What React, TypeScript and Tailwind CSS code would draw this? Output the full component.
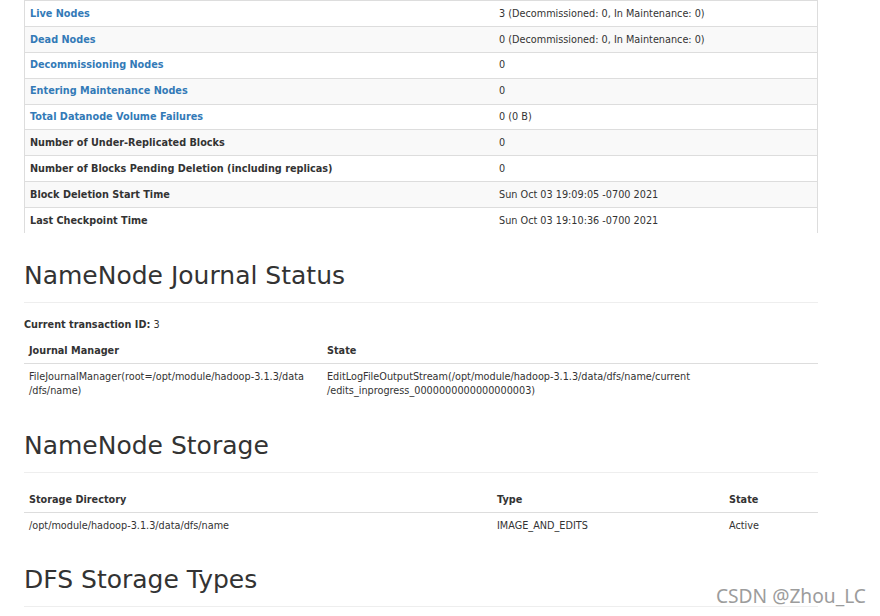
import React from 'react';

const overview = [
  { label: 'Live Nodes', value: '3 (Decommissioned: 0, In Maintenance: 0)', link: true },
  { label: 'Dead Nodes', value: '0 (Decommissioned: 0, In Maintenance: 0)', link: true },
  { label: 'Decommissioning Nodes', value: '0', link: true },
  { label: 'Entering Maintenance Nodes', value: '0', link: true },
  { label: 'Total Datanode Volume Failures', value: '0 (0 B)', link: true },
  { label: 'Number of Under-Replicated Blocks', value: '0' },
  { label: 'Number of Blocks Pending Deletion (including replicas)', value: '0' },
  { label: 'Block Deletion Start Time', value: 'Sun Oct 03 19:09:05 -0700 2021' },
  { label: 'Last Checkpoint Time', value: 'Sun Oct 03 19:10:36 -0700 2021' },
];

const PageHeader = ({ title, className = 'mt-[30px]' }: { title: string; className?: string }) => (
  <div className={`${className} pb-[13px] border-b border-[#eeeeee]`}>
    <h2 className="text-[25px] leading-[27px] font-normal text-[#333333]">{title}</h2>
  </div>
);

const App = () => {
  return (
    <div
      className="relative w-[880px] h-[616px] overflow-hidden bg-white text-[#333333]"
      style={{ fontFamily: '"DejaVu Sans", Verdana, sans-serif' }}
    >
      <div className="ml-[24px] w-[794px]">
        {/* Summary table */}
        <div className="border-x border-[#dddddd]">
          {overview.map((row, i) => (
            <div
              key={row.label}
              className={`flex items-center h-[25.9px] pt-px border-t border-[#dddddd] text-[9.7px] ${
                i % 2 === 1 ? 'bg-[#f9f9f9]' : 'bg-white'
              }`}
            >
              <div className="w-[469px] pl-[5px] font-bold">
                {row.link ? <a className="text-[#337ab7]">{row.label}</a> : row.label}
              </div>
              <div className="flex-1 pl-[5px]">{row.value}</div>
            </div>
          ))}
        </div>

        {/* Journal status */}
        <div className="-mt-px">
          <PageHeader title="NameNode Journal Status" />
        </div>
        <p className="mt-[15px] text-[9.7px] leading-[14px]">
          <span className="font-bold">Current transaction ID:</span> 3
        </p>
        <div className="mt-[6px] text-[9.7px] leading-[14px]">
          <div className="flex h-[26px] items-center border-b border-[#dddddd] font-bold">
            <div className="w-[298px] pl-[5px]">Journal Manager</div>
            <div className="flex-1 pl-[5px]">State</div>
          </div>
          <div className="flex pt-[6px] pb-[4px]">
            <div className="w-[298px] pl-[5px]">
              FileJournalManager(root=/opt/module/hadoop-3.1.3/data
              <br />
              /dfs/name)
            </div>
            <div className="flex-1 pl-[5px]">
              EditLogFileOutputStream(/opt/module/hadoop-3.1.3/data/dfs/name/current
              <br />
              /edits_inprogress_0000000000000000003)
            </div>
          </div>
        </div>

        {/* Storage */}
        <PageHeader title="NameNode Storage" />
        <div className="mt-[14px] text-[9.7px] leading-[14px]">
          <div className="flex h-[26px] items-center border-b border-[#dddddd] font-bold">
            <div className="w-[468px] pl-[5px]">Storage Directory</div>
            <div className="w-[232px] pl-[5px]">Type</div>
            <div className="flex-1 pl-[5px]">State</div>
          </div>
          <div className="flex h-[26px] items-center">
            <div className="w-[468px] pl-[5px]">/opt/module/hadoop-3.1.3/data/dfs/name</div>
            <div className="w-[232px] pl-[5px]">IMAGE_AND_EDITS</div>
            <div className="flex-1 pl-[5px]">Active</div>
          </div>
        </div>

        <PageHeader title="DFS Storage Types" className="mt-[27px]" />
      </div>

      {/* watermark */}
      <div
        className="absolute right-[14px] top-[583px] text-[19.2px] leading-[26px] text-[#9c9c9c]"
        style={{ fontFamily: '"Noto Sans", sans-serif' }}
      >
        CSDN @Zhou_LC
      </div>
    </div>
  );
};

export default App;
